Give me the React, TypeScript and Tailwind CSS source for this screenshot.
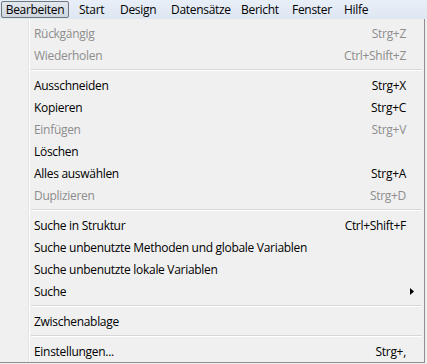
type Item = { label: string; shortcut?: string; disabled?: boolean; submenu?: boolean };

const groups: Item[][] = [
  [
    { label: "Rückgängig", shortcut: "Strg+Z", disabled: true },
    { label: "Wiederholen", shortcut: "Ctrl+Shift+Z", disabled: true },
  ],
  [
    { label: "Ausschneiden", shortcut: "Strg+X" },
    { label: "Kopieren", shortcut: "Strg+C" },
    { label: "Einfügen", shortcut: "Strg+V", disabled: true },
    { label: "Löschen" },
    { label: "Alles auswählen", shortcut: "Strg+A" },
    { label: "Duplizieren", shortcut: "Strg+D", disabled: true },
  ],
  [
    { label: "Suche in Struktur", shortcut: "Ctrl+Shift+F" },
    { label: "Suche unbenutzte Methoden und globale Variablen" },
    { label: "Suche unbenutzte lokale Variablen" },
    { label: "Suche", submenu: true },
  ],
  [{ label: "Zwischenablage" }],
  [{ label: "Einstellungen...", shortcut: "Strg+," }],
];

const menus = [
  { label: "Start", w: "w-[41px]" },
  { label: "Design", w: "w-[51px]" },
  { label: "Datensätze", w: "w-[70px]" },
  { label: "Bericht", w: "w-[51px]" },
  { label: "Fenster", w: "w-[52px]" },
  { label: "Hilfe", w: "w-[30px]" },
];

function Row({ item }: { item: Item }) {
  return (
    <div
      className={`flex h-[22px] items-center pt-px pl-[34px] pr-[18px] ${
        item.disabled ? "text-[#8d8d8d]" : "text-black"
      }`}
    >
      <span className="flex-1">{item.label}</span>
      {item.shortcut && <span>{item.shortcut}</span>}
      {item.submenu && (
        <svg width="4" height="7" viewBox="0 0 4 7" className="-mr-[8px]">
          <path d="M0 0 L4 3.5 L0 7 Z" fill="#000" />
        </svg>
      )}
    </div>
  );
}

function Separator() {
  return (
    <div className="flex h-[8px] flex-col justify-center pl-[31px] pr-[2px]">
      <div className="h-px bg-[#d7d7d7]" />
      <div className="h-px bg-white" />
    </div>
  );
}

export default function App() {
  return (
    <div
      className="relative h-[364px] w-[427px] overflow-hidden bg-[#f0f0f0] text-[12px] leading-none tracking-[-0.3px]"
      style={{ fontFamily: '"Open Sans", "Noto Sans", sans-serif' }}
    >
      {/* Menu bar */}
      <div className="flex h-[19px] items-center bg-gradient-to-b from-[#e9eff8] to-[#dde6f2]">
        <div className="ml-px flex h-[17px] w-[68px] items-center justify-center rounded-[2px] border border-[#6e7680] bg-gradient-to-b from-[#e3e8ee] to-[#cfd6df]">
          Bearbeiten
        </div>
        <div className="ml-[10px] flex">
          {menus.map((m) => (
            <span key={m.label} className={m.w}>
              {m.label}
            </span>
          ))}
        </div>
      </div>

      {/* Dropdown */}
      <div className="relative flex h-[344px] w-[425px] flex-col border-r border-b border-[#8e8f8f] bg-[#f0f0f0] pt-[3px]">
        <div className="absolute left-[28px] top-0 bottom-0 w-[2px] border-l border-[#e2e3e3] bg-white" />
        {groups.map((g, i) => (
          <div key={i} className="relative">
            {i > 0 && <Separator />}
            {g.map((it) => (
              <Row key={it.label} item={it} />
            ))}
          </div>
        ))}
      </div>
    </div>
  );
}
